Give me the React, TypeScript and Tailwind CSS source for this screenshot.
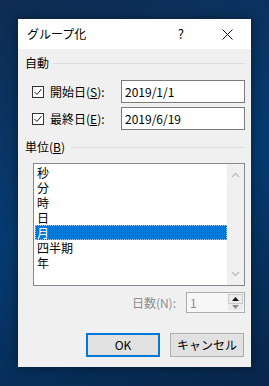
import { type FC } from "react";

const font = { fontFamily: '"Noto Sans CJK JP", "Noto Sans", sans-serif' };

const Check: FC = () => (
  <div className="w-[12px] h-[12px] border border-[#333] bg-white flex items-center justify-center">
    <svg width="10" height="10" viewBox="0 0 10 10">
      <path d="M1.5 5 L4 7.5 L8.5 2" fill="none" stroke="#222" strokeWidth="1" />
    </svg>
  </div>
);

const units = ["秒", "分", "時", "日", "月", "四半期", "年"];

export default function App() {
  return (
    <div
      className="w-[269px] h-[386px] pt-[19px] pl-[18px] bg-[linear-gradient(160deg,#0e2c52_0%,#053a70_50%,#08264a_100%)] overflow-hidden"
      style={font}
    >
      <div className="w-[233px] h-[348px] bg-[#f0f0f0] flex flex-col text-[12px] text-black leading-[14px] shadow-[0_0_10px_rgba(0,0,0,0.45)]">
        {/* Title bar */}
        <div className="h-[30px] bg-white flex items-center pl-[9px]">
          <span className="text-[12px]">グループ化</span>
          <span className="ml-auto mr-[38px] text-[13px]">?</span>
          <svg width="11" height="11" viewBox="0 0 11 11" className="mr-[18px]">
            <path d="M0.5 0.5 L10.5 10.5 M10.5 0.5 L0.5 10.5" stroke="#111" strokeWidth="1" />
          </svg>
        </div>

        <div className="pl-[7px] pr-[6px] flex flex-col">
          {/* 自動 */}
          <div className="mt-[7px] h-[14px] flex items-center">
            <span>自動</span>
            <div className="flex-1 h-px bg-[#dcdcdc] ml-[4px]" />
          </div>

          <div className="mt-[10px] h-[23px] flex items-center pl-[7px]">
            <Check />
            <span className="ml-[6px]">
              開始日(<span className="underline">S</span>):
            </span>
            <div className="ml-auto w-[124px] h-[23px] border border-[#7a7a7a] bg-white flex items-center pl-[3px]">
              2019/1/1
            </div>
          </div>
          <div className="mt-[4px] h-[23px] flex items-center pl-[7px]">
            <Check />
            <span className="ml-[6px]">
              最終日(<span className="underline">E</span>):
            </span>
            <div className="ml-auto w-[124px] h-[23px] border border-[#7a7a7a] bg-white flex items-center pl-[3px]">
              2019/6/19
            </div>
          </div>

          {/* 単位 */}
          <div className="mt-[10px] h-[14px] flex items-center">
            <span>
              単位(<span className="underline">B</span>)
            </span>
            <div className="flex-1 h-px bg-[#dcdcdc] ml-[6px]" />
          </div>

          <div className="mt-[9px] ml-[8px] w-[212px] h-[123px] border border-[#828790] bg-white flex">
            <div className="flex-1 pt-px pl-px">
              {units.map((u) => (
                <div
                  key={u}
                  className={
                    u === "月"
                      ? "h-[15px] leading-[15px] pl-[2px] bg-[#0078d7] text-white outline outline-1 outline-dotted outline-[#9ec5ec] -outline-offset-1"
                      : "h-[15px] leading-[15px] pl-[2px]"
                  }
                >
                  {u}
                </div>
              ))}
            </div>
            <div className="w-[17px] bg-[#f0f0f0] flex flex-col items-center justify-between py-[8px]">
              <svg width="9" height="6" viewBox="0 0 9 6">
                <path d="M1 5 L4.5 1.5 L8 5" fill="none" stroke="#c0c0c0" strokeWidth="1.5" />
              </svg>
              <svg width="9" height="6" viewBox="0 0 9 6">
                <path d="M1 1 L4.5 4.5 L8 1" fill="none" stroke="#c0c0c0" strokeWidth="1.5" />
              </svg>
            </div>
          </div>

          {/* 日数 */}
          <div className="mt-[6px] h-[21px] flex items-center justify-end">
            <span className="text-[#8d8d8d]">日数(N):</span>
            <div className="ml-[10px] w-[59px] h-[21px] border border-[#acacac] bg-[#f7f7f7] flex">
              <span className="flex-1 flex items-center pl-[3px] text-[#8d8d8d]">1</span>
              <div className="w-[16px] flex flex-col py-px pr-px">
                <div className="flex-1 border border-[#c8c8c8] bg-[#ececec] flex items-center justify-center">
                  <svg width="7" height="4" viewBox="0 0 7 4">
                    <path d="M0 4 L3.5 0 L7 4 Z" fill="#111" />
                  </svg>
                </div>
                <div className="flex-1 bg-[#ececec] flex items-center justify-center">
                  <svg width="7" height="4" viewBox="0 0 7 4">
                    <path d="M0 0 L3.5 4 L7 0 Z" fill="#8a8a8a" />
                  </svg>
                </div>
              </div>
            </div>
          </div>

          {/* Buttons */}
          <div className="mt-[20px] flex pl-[61px] gap-[10px]">
            <button className="w-[74px] h-[24px] border-2 border-[#0078d7] bg-[#e1e1e1] text-[12px] flex items-center justify-center">
              OK
            </button>
            <button className="w-[74px] h-[24px] border border-[#adadad] bg-[#e1e1e1] text-[12px] flex items-center justify-center">
              キャンセル
            </button>
          </div>
        </div>
      </div>
    </div>
  );
}
